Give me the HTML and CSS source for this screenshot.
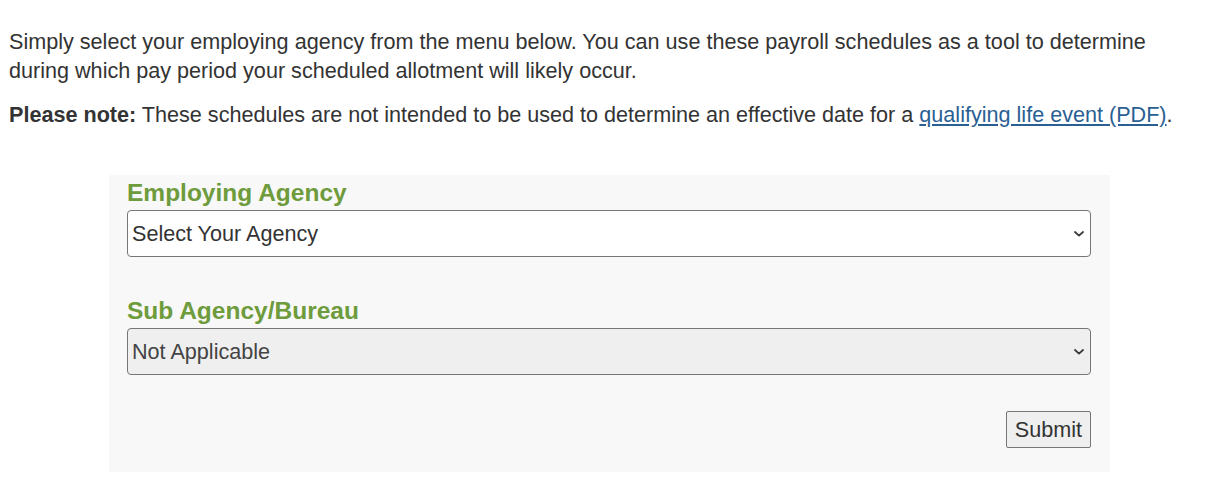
FILE: index.html
```html
<!DOCTYPE html>
<html lang="en">
<head>
<meta charset="utf-8">
<title>Payroll Schedules</title>
<link rel="stylesheet" href="styles.css">
</head>
<body>
<div class="intro">
  <p>Simply select your employing agency from the menu below. You can use these payroll schedules as a tool to determine during which pay period your scheduled allotment will likely occur.</p>
  <p><strong>Please note:</strong> These schedules are not intended to be used to determine an effective date for a <a href="#">qualifying life event (PDF)</a>.</p>
</div>
<form class="agency-form">
  <label class="field-label" for="agency">Employing Agency</label>
  <div class="select-wrap">
    <select id="agency" class="field-select">
      <option>Select Your Agency</option>
    </select>
    <svg class="chevron" width="10" height="6" viewBox="0 0 10 6" aria-hidden="true"><path d="M1 1 L5 4.6 L9 1" fill="none" stroke="#3a3a3a" stroke-width="1.8" stroke-linecap="round" stroke-linejoin="round"/></svg>
  </div>
  <label class="field-label second" for="sub">Sub Agency/Bureau</label>
  <div class="select-wrap">
    <select id="sub" class="field-select disabled" disabled>
      <option>Not Applicable</option>
    </select>
    <svg class="chevron" width="10" height="6" viewBox="0 0 10 6" aria-hidden="true"><path d="M1 1 L5 4.6 L9 1" fill="none" stroke="#3a3a3a" stroke-width="1.8" stroke-linecap="round" stroke-linejoin="round"/></svg>
  </div>
  <div class="actions">
    <button type="button" class="submit">Submit</button>
  </div>
</form>
</body>
</html>
```

FILE: styles.css
```css
html, body {
  margin: 0;
  padding: 0;
  background: #ffffff;
}
body {
  font-family: "Liberation Sans", Arial, sans-serif;
  color: #333333;
  font-size: 21.6px;
  line-height: 29px;
}
.intro {
  padding: 27px 9px 0 9px;
  width: 1175px;
}
.intro p {
  margin: 0 0 15px 0;
}
.intro strong {
  font-weight: bold;
}
.intro a {
  color: #2a5f93;
  text-decoration: underline;
}
.agency-form {
  margin: 46px 0 0 109px;
  width: 1001px;
  box-sizing: border-box;
  background: #f8f8f8;
  padding: 1px 19px 24px 18px;
  display: flex;
  flex-direction: column;
}
.field-label {
  color: #6e9b3c;
  font-weight: bold;
  font-size: 24.5px;
  line-height: 34px;
}
.field-label.second {
  margin-top: 37px;
}
.select-wrap {
  position: relative;
  display: flex;
}
.field-select {
  flex: 1;
  height: 47px;
  -webkit-appearance: none;
  appearance: none;
  font-family: "Liberation Sans", Arial, sans-serif;
  font-size: 21.6px;
  color: #333333;
  border: 1px solid #767676;
  border-radius: 4px;
  background-color: #ffffff;
  padding: 0 30px 0 4px;
  margin: 0;
}
.field-select.disabled {
  background-color: #efefef;
  color: #444444;
  opacity: 1;
}
.chevron {
  position: absolute;
  right: 7px;
  top: 21px;
  pointer-events: none;
}
.actions {
  display: flex;
  justify-content: flex-end;
  margin-top: 36px;
}
.submit {
  font-family: "Liberation Sans", Arial, sans-serif;
  font-size: 21.6px;
  color: #333333;
  background: #efefef;
  border: 1px solid #767676;
  border-radius: 2px;
  height: 37px;
  padding: 0 8px;
}
```
